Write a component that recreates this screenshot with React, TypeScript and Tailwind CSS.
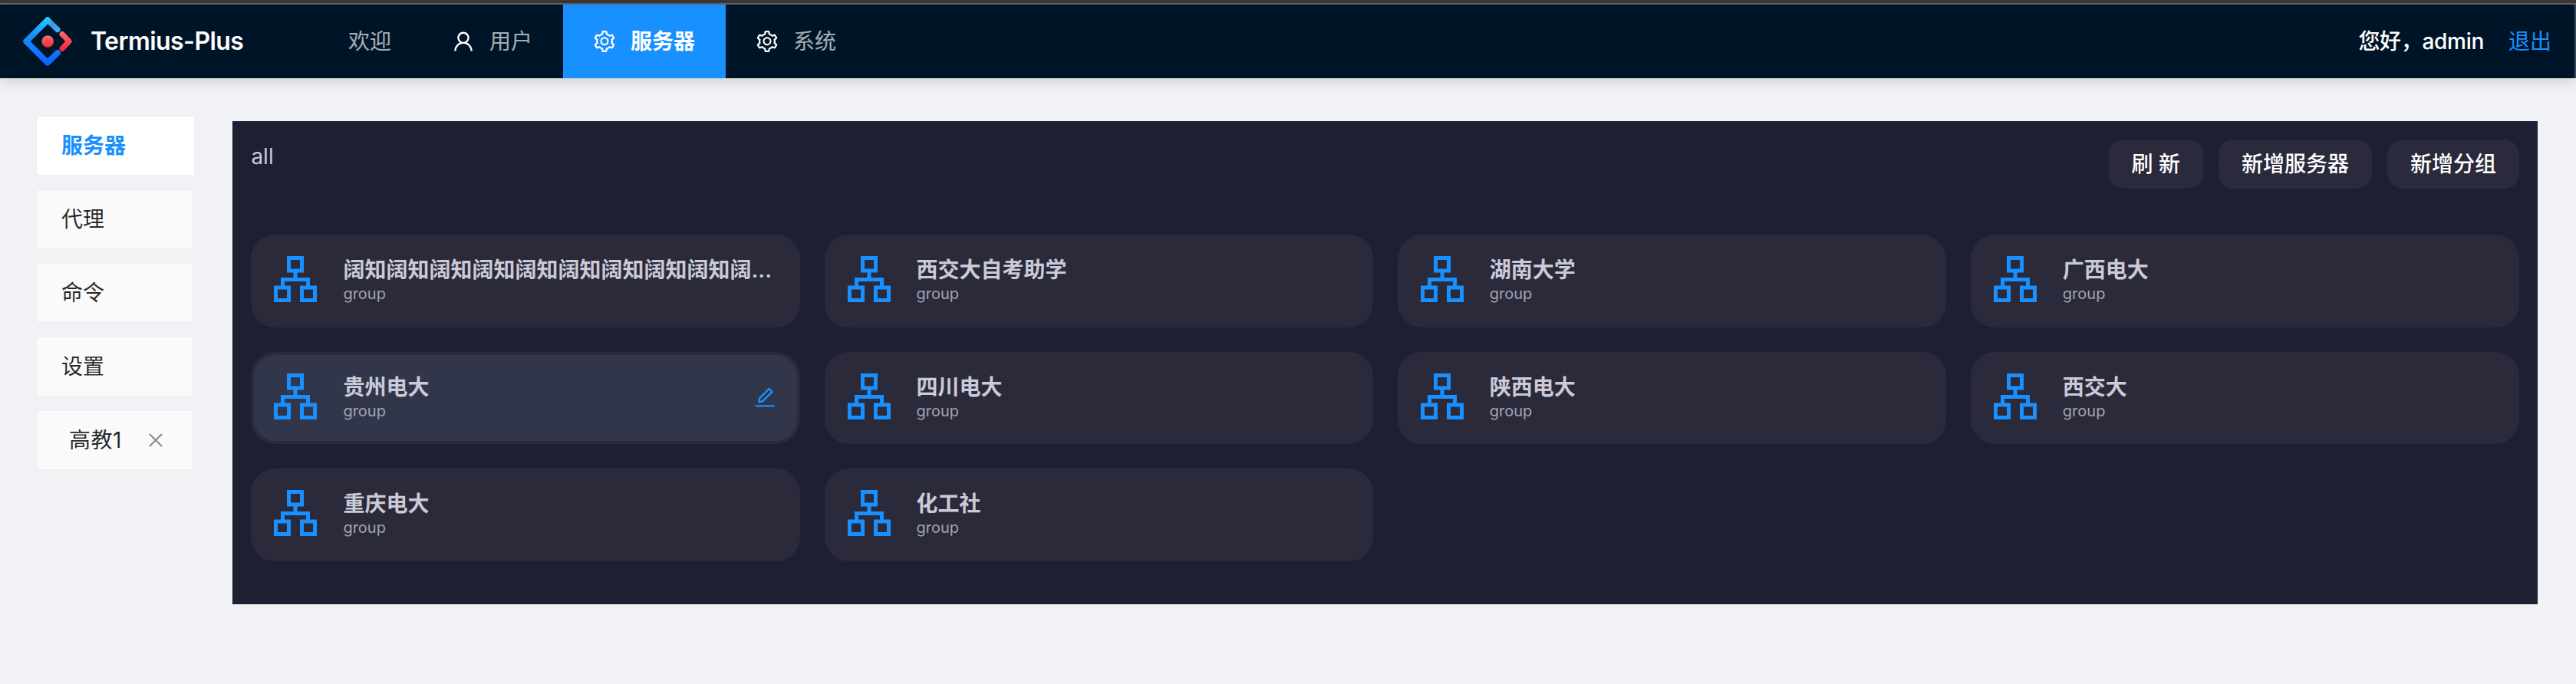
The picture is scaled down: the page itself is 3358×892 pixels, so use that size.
import { AiOutlineClose, AiOutlineEdit, AiOutlineSetting, AiOutlineUser } from "react-icons/ai";

const groups = [
  "阔知阔知阔知阔知阔知阔知阔知阔知阔知阔...",
  "西交大自考助学",
  "湖南大学",
  "广西电大",
  "贵州电大",
  "四川电大",
  "陕西电大",
  "西交大",
  "重庆电大",
  "化工社",
];

const sideTabs = ["服务器", "代理", "命令", "设置"];

function Logo() {
  return (
    <svg className="h-16 w-16 shrink-0" viewBox="0 0 64 64" fill="none">
      <defs>
        <linearGradient id="blue" x1="32" y1="0" x2="32" y2="64" gradientUnits="userSpaceOnUse">
          <stop offset="0" stopColor="#29cdff" />
          <stop offset="0.4" stopColor="#148eff" />
          <stop offset="1" stopColor="#0a60ff" />
        </linearGradient>
        <linearGradient id="tip" x1="33" y1="5" x2="46" y2="18" gradientUnits="userSpaceOnUse">
          <stop offset="0" stopColor="#29c0ff" />
          <stop offset="0.35" stopColor="#4294e6" />
          <stop offset="1" stopColor="#37b0fb" />
        </linearGradient>
        <linearGradient id="red" x1="0" y1="18" x2="0" y2="46" gradientUnits="userSpaceOnUse">
          <stop offset="0" stopColor="#fa6e6e" />
          <stop offset="0.45" stopColor="#f74a5c" />
          <stop offset="1" stopColor="#f51d2c" />
        </linearGradient>
        <linearGradient id="dot" x1="0" y1="24" x2="0" y2="40" gradientUnits="userSpaceOnUse">
          <stop offset="0" stopColor="#fa6e6e" />
          <stop offset="1" stopColor="#f5283a" />
        </linearGradient>
      </defs>
      <path d="M32 4.2 45 16.6" stroke="url(#tip)" strokeWidth="7.2" strokeLinecap="round" />
      <path
        d="M32 4.2 4.2 32 32 59.8 45 47"
        stroke="url(#blue)"
        strokeWidth="7.8"
        strokeLinecap="round"
        strokeLinejoin="round"
      />
      <path
        d="M51 22.5 60 32 51 41.5"
        stroke="url(#red)"
        strokeWidth="7"
        strokeLinecap="round"
        strokeLinejoin="round"
      />
      <circle cx="32.2" cy="32" r="7.8" fill="url(#dot)" />
    </svg>
  );
}

function TreeIcon() {
  return (
    <svg className="h-[60px] w-14 shrink-0" viewBox="0 0 56 60" fill="none" stroke="#1890ff" strokeWidth="5">
      <rect x="19.5" y="2.5" width="17" height="16.5" />
      <path d="M28 19v11M11.5 39v-8.5h33V39" />
      <rect x="2.5" y="41" width="17" height="16.5" />
      <rect x="36.5" y="41" width="17" height="16.5" />
    </svg>
  );
}

function GroupCard({ name, active }: { name: string; active: boolean }) {
  return (
    <div
      className={`flex h-[120.67px] items-start rounded-[32px] border-4 border-[#2a2a3c] pt-6 pr-[26px] pl-[26px] ${
        active ? "bg-[#32364a]" : "bg-[#2a2a3b]"
      }`}
    >
      <TreeIcon />
      <div className="ml-[34px] min-w-0 flex-1">
        <div className="mt-[-4px] whitespace-nowrap text-[28px] leading-[44px] font-semibold text-[#cbcad6]">{name}</div>
        <div className="mt-[-6px] text-[20px] leading-[30px] text-[#a3a3b1]">group</div>
      </div>
      {active && <AiOutlineEdit className="mt-[15px] h-8 w-8 shrink-0 text-[#1890ff]" />}
    </div>
  );
}

function ToolButton({ children }: { children: string }) {
  return (
    <button className="h-16 whitespace-nowrap rounded-[20px] bg-[#2a2a3c] px-[30px] text-[28px] leading-[44px] font-medium text-white">
      {children}
    </button>
  );
}

export default function App() {
  return (
    <div className="h-[892px] w-[3358px] overflow-hidden bg-[#f0f2f5] font-['Inter','Noto_Sans_CJK_SC',sans-serif]">
      <div className="h-1 bg-[#38383c]" />
      <div className="h-0.5 bg-[#646466]" />
      <header className="flex h-24 items-center border-r-2 border-[#3b4a56] bg-[#001427] pr-[30px] pl-[30px] text-[28px] shadow-[0_4px_16px_rgba(0,0,0,0.15)]">
        <Logo />
        <h1 className="ml-6 w-[296px] text-[32px] leading-none font-semibold tracking-[-0.55px] text-white">Termius-Plus</h1>
        <nav className="flex h-full flex-1 text-white/65">
          <a className="flex items-center px-10">欢迎</a>
          <a className="flex items-center gap-[18px] pr-10 pl-[38px]">
            <AiOutlineUser className="h-8 w-8 text-white" />
            用户
          </a>
          <a className="flex items-center gap-[18px] bg-[#1890ff] pr-10 pl-[38px] font-semibold text-white">
            <AiOutlineSetting className="h-8 w-8" />
            服务器
          </a>
          <a className="flex items-center gap-[18px] pr-10 pl-[38px]">
            <AiOutlineSetting className="h-8 w-8 text-white" />
            系统
          </a>
        </nav>
        <span className="font-medium tracking-[-0.3px] text-white">您好，admin</span>
        <a className="ml-8 text-[#1890ff]">退出</a>
      </header>
      <div className="flex items-start">
        <aside className="mt-12 ml-[46px] flex h-[640px] w-[207px] flex-col gap-4 text-[28px] text-black/85 shadow-[inset_-2px_0_0_#f0f0f0]">
          {sideTabs.map((tab, i) => (
            <div
              key={tab}
              className={`flex h-20 items-center rounded-l-[4px] border-2 border-[#f0f0f0] pl-8 ${
                i === 0 ? "border-r-white bg-white font-semibold text-[#1890ff]" : "bg-[#fafafa]"
              }`}
            >
              {tab}
            </div>
          ))}
          <div className="flex h-20 items-center rounded-l-[4px] border-2 border-[#f0f0f0] bg-[#fafafa] pl-[42px]">
            <span className="tracking-[0.5px]">高教1</span>
            <AiOutlineClose className="ml-[31px] h-[26px] w-[26px] text-black/45" />
          </div>
        </aside>
        <main className="mt-14 ml-[50px] h-[630px] w-[3005px] bg-[#1e1f32] pt-6 pr-6 pl-[24.4px]">
          <div className="flex h-[124px] items-start justify-between">
            <div className="text-[28px] leading-[44px] text-[#cbcad6]">all</div>
            <div className="flex gap-5">
              <ToolButton>刷 新</ToolButton>
              <ToolButton>新增服务器</ToolButton>
              <ToolButton>新增分组</ToolButton>
            </div>
          </div>
          <div className="grid grid-cols-4 gap-8">
            {groups.map((name) => (
              <GroupCard key={name} name={name} active={name === "贵州电大"} />
            ))}
          </div>
        </main>
      </div>
    </div>
  );
}
